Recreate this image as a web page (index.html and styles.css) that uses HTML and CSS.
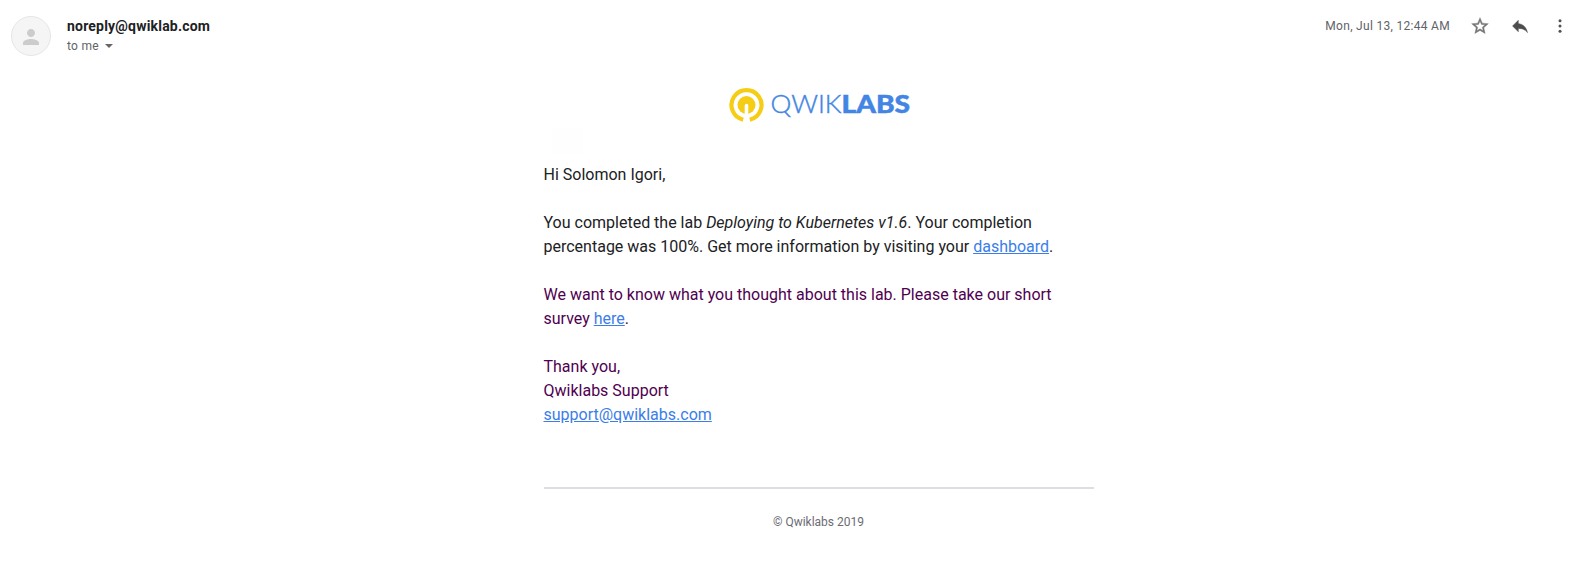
FILE: index.html
```html
<!DOCTYPE html>
<html lang="en">
<head>
<meta charset="utf-8">
<title>Qwiklabs message</title>
<link rel="stylesheet" href="styles.css">
</head>
<body>
<header class="message-header">
  <div class="avatar">
    <svg width="24" height="24" viewBox="0 0 24 24"><path fill="#ccc" d="M12 12c2.200 0 4-1.800 4-4s-1.800-4-4-4-4 1.800-4 4 1.800 4 4 4zm0 2c-2.700 0-8 1.300-8 4v2h16v-2c0-2.700-5.300-4-8-4z"/></svg>
  </div>
  <div class="sender">
    <div class="sender-name">noreply@qwiklab.com</div>
    <div class="recipient">to me <span class="caret"></span></div>
  </div>
  <div class="meta">
    <span class="date">Mon, Jul 13, 12:44 AM</span>
    <svg class="icon" viewBox="0 0 24 24"><path fill="#757575" stroke="#757575" stroke-width=".5" d="M22 9.240l-7.190-.62L12 2 9.190 8.630 2 9.240l5.460 4.730L5.820 21 12 17.270 18.180 21l-1.630-7.030L22 9.240zM12 15.400l-3.760 2.270 1-4.280-3.320-2.880 4.380-.38L12 6.100l1.710 4.040 4.380.38-3.320 2.880 1 4.280L12 15.400z"/></svg>
    <svg class="icon" viewBox="0 0 24 24"><path fill="#4d4d4d" stroke="#4d4d4d" stroke-width=".5" d="M10 9V5l-7 7 7 7v-4.100c5 0 8.500 1.600 11 5.100-1-5-4-10-11-11z"/></svg>
    <svg class="icon" viewBox="0 0 24 24"><g fill="#505050"><circle cx="12" cy="5.600" r="1.800"/><circle cx="12" cy="12" r="1.800"/><circle cx="12" cy="18.400" r="1.800"/></g></svg>
  </div>
</header>
<main class="content">
  <svg class="logo" width="190" height="40" viewBox="0 0 190 40">
    <path d="M19.200 34.700A15 15 0 1 1 25.800 34.700" fill="none" stroke="#f5cd14" stroke-width="4.200"/>
    <circle cx="22.500" cy="20" r="9" fill="#f5cd14"/>
    <path d="M22.500 20.500v17" stroke="#fff" stroke-width="3.600" stroke-linecap="round"/>
    <text class="logo-light" x="46.500" y="28" textLength="71" lengthAdjust="spacingAndGlyphs">QWIK</text>
    <text class="logo-bold" x="117.500" y="28" textLength="68.500" lengthAdjust="spacingAndGlyphs">LABS</text>
  </svg>
  <div class="ghost"></div>
  <p>Hi Solomon Igori,</p>
  <p>You completed the lab <em>Deploying to Kubernetes v1.6</em>. Your completion<br>percentage was 100%. Get more information by visiting your <a href="#">dashboard</a>.</p>
  <p class="quoted">We want to know what you thought about this lab. Please take our short<br>survey <a href="#">here</a>.</p>
  <p class="quoted">Thank you,<br>Qwiklabs Support<br><a href="#">support@qwiklabs.com</a></p>
  <footer class="footer">© Qwiklabs 2019</footer>
</main>
</body>
</html>
```

FILE: styles.css
```css
body {
  margin: 0;
  background: #fff;
  color: #202124;
  font-family: Roboto, sans-serif;
}
.message-header {
  display: flex;
  height: 72px;
  padding: 16px 11px 0 11px;
  box-sizing: border-box;
}
.avatar {
  display: flex;
  align-items: center;
  justify-content: center;
  box-sizing: border-box;
  width: 40px;
  height: 40px;
  border: 1px solid #e6e6e6;
  border-radius: 50%;
  background: #f5f5f5;
}
.avatar svg {
  position: relative;
  top: 0.5px;
}
.sender {
  margin-left: 16px;
}
.sender-name {
  font-size: 14px;
  font-weight: 700;
  line-height: 20px;
  letter-spacing: 0.2px;
}
.recipient {
  display: flex;
  align-items: center;
  font-size: 12px;
  line-height: 20px;
  letter-spacing: 0.3px;
  color: #5f6368;
}
.caret {
  margin-left: 6px;
  border: 4px solid transparent;
  border-top-color: #666;
  border-bottom: 0;
}
.meta {
  display: flex;
  align-items: center;
  gap: 20px;
  height: 20px;
  margin-left: auto;
}
.date {
  font-size: 12px;
  letter-spacing: 0.3px;
  color: #5f6368;
}
.icon {
  width: 20px;
  height: 20px;
}
.content {
  width: 550px;
  margin-left: 543.5px;
  padding-top: 13px;
  font-size: 16px;
  line-height: 24px;
}
.logo {
  display: block;
  margin-left: 180px;
}
.logo-light,
.logo-bold {
  font-family: Lato, sans-serif;
  font-size: 25px;
  fill: #4285e4;
}
.logo-light {
  font-weight: 300;
  stroke: #4285e4;
  stroke-width: 0.4px;
}
.logo-bold {
  font-weight: 900;
  stroke: #4285e4;
  stroke-width: 0.5px;
}
.ghost {
  width: 31px;
  height: 25px;
  margin: 3px 0 10px 8px;
  background: #fefefe;
}
.content p {
  margin: 0 0 24px;
}
.content a {
  color: #3b7de9;
}
.quoted {
  color: #500050;
}
.footer {
  margin-top: 60px;
  padding-top: 21px;
  border-top: 2px solid #dddde3;
  color: #6b6c72;
  font-size: 12px;
  text-align: center;
}
.content .quoted + .footer {
  margin-top: 60px;
}
```
